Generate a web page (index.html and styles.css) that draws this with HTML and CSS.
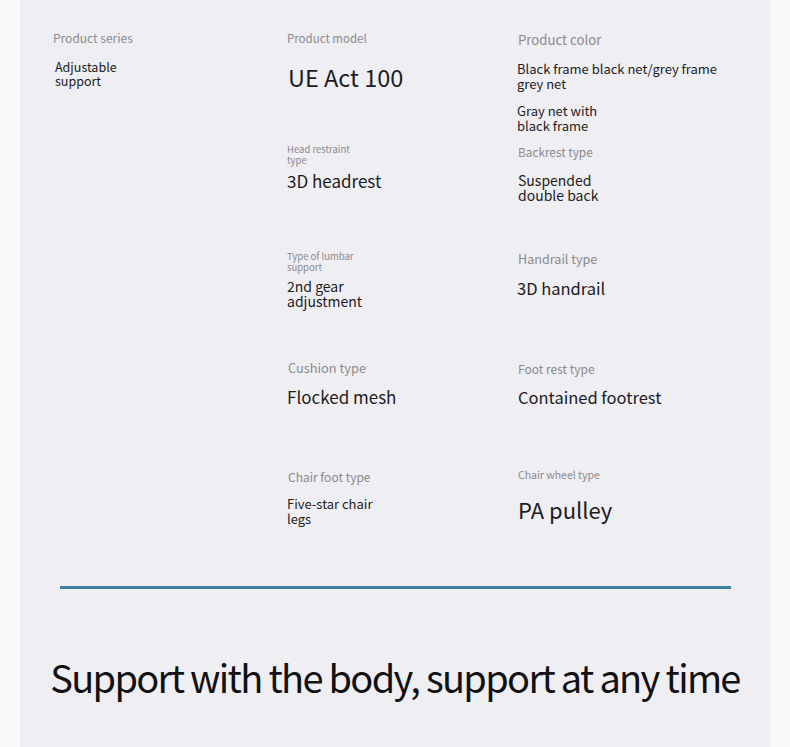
FILE: index.html
```html
<!DOCTYPE html>
<html lang="en">
<head>
<meta charset="utf-8">
<title>Product parameters</title>
<link rel="stylesheet" href="styles.css">
</head>
<body>
<div class="panel">
  <div class="specs">
    <div class="cell">
      <div class="label l-series">Product series</div>
      <div class="value v-series">Adjustable<br>support</div>
    </div>
    <div class="cell">
      <div class="label l-model">Product model</div>
      <div class="value v-model">UE Act 100</div>
    </div>
    <div class="cell">
      <div class="label l-color">Product color</div>
      <div class="value v-color">Black frame black net/grey frame<br>grey net</div>
      <div class="value v-color v-color2">Gray net with<br>black frame</div>
    </div>

    <div class="cell"></div>
    <div class="cell">
      <div class="label l-tiny">Head restraint<br>type</div>
      <div class="value v-mid v-head">3D headrest</div>
    </div>
    <div class="cell">
      <div class="label l-back">Backrest type</div>
      <div class="value v-two v-back">Suspended<br>double back</div>
    </div>

    <div class="cell"></div>
    <div class="cell">
      <div class="label l-tiny">Type of lumbar<br>support</div>
      <div class="value v-two v-lumbar">2nd gear<br>adjustment</div>
    </div>
    <div class="cell">
      <div class="label l-hand">Handrail type</div>
      <div class="value v-mid v-hand">3D handrail</div>
    </div>

    <div class="cell"></div>
    <div class="cell">
      <div class="label l-cush">Cushion type</div>
      <div class="value v-mid v-cush">Flocked mesh</div>
    </div>
    <div class="cell">
      <div class="label l-small">Foot rest type</div>
      <div class="value v-mid v-cush v-foot-rest">Contained footrest</div>
    </div>

    <div class="cell"></div>
    <div class="cell">
      <div class="label l-small l-chairfoot">Chair foot type</div>
      <div class="value v-two v-foot">Five-star chair<br>legs</div>
    </div>
    <div class="cell">
      <div class="label l-wheel">Chair wheel type</div>
      <div class="value v-wheel">PA pulley</div>
    </div>
  </div>
  <div class="rule"></div>
  <div class="tagline">Support with the body, support at any time</div>
</div>
</body>
</html>
```

FILE: styles.css
```css
html, body {
  margin: 0;
  padding: 0;
}
body {
  background: #f8f8f9;
  width: 790px;
  height: 747px;
  overflow: hidden;
  font-family: "Noto Sans CJK SC", "Noto Sans", sans-serif;
  color: #1c1c1e;
}
.panel {
  margin-left: 20px;
  width: 750px;
  height: 747px;
  background: #efeef2;
  padding-top: 31px;
  box-sizing: border-box;
}
.specs {
  display: grid;
  grid-template-columns: 234px 230px 1fr;
  grid-template-rows: 113px 107px 110px 108px 117px;
  padding-left: 33px;
}
.cell {
  display: flex;
  flex-direction: column;
}
.label {
  color: #8b8a8f;
  line-height: 1.15;
}
.l-series { font-size: 12px; }
.l-model { font-size: 11.5px; margin-top: 1px; }
.l-color { font-size: 13.2px; margin-left: 1px; margin-top: 1px; }
.l-back { font-size: 11.8px; margin-left: 1px; margin-top: 1px; }
.l-hand { font-size: 12.6px; margin-left: 1px; margin-top: 1px; }
.l-cush { font-size: 12.8px; margin-left: 1px; }
.l-small { font-size: 12px; margin-left: 1px; margin-top: 1px; }
.l-tiny { font-size: 9.5px; line-height: 11px; }
.l-wheel { font-size: 10.5px; margin-left: 1px; }
.value {
  line-height: 15px;
}
.v-series { font-size: 12.5px; margin: 15px 0 0 2px; line-height: 14px; }
.v-model { font-size: 23.5px; line-height: 30px; margin-top: 17px; margin-left: 1px; }
.v-color { font-size: 13px; margin-top: 14px; }
.v-color2 { margin-top: 12px; }
.v-mid { font-size: 17px; line-height: 22px; }
.v-two { font-size: 14px; line-height: 15px; }
.v-head { margin-top: 4px; }
.v-back { margin-top: 14px; margin-left: 1px; }
.v-lumbar { margin-top: 6px; }
.v-hand { margin-top: 11px; font-size: 16.5px; }
.v-cush { margin-top: 10px; }
.v-foot-rest { font-size: 16.5px; margin-left: 1px; }
.v-foot { margin-top: 12px; font-size: 13px; }
.v-wheel { font-size: 22px; line-height: 28px; margin-top: 14px; margin-left: 1px; }
.rule {
  margin: 0 39px 0 40px;
  height: 3px;
  background: #3f7fa0;
}
.tagline {
  margin-top: 66px;
  text-align: center;
  font-size: 38px;
  line-height: 44px;
  color: #111114;
  letter-spacing: -1.7px;
}
```
